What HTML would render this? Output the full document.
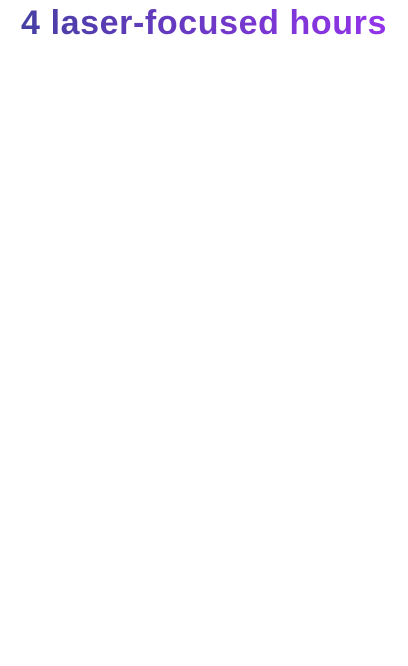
<!DOCTYPE html>
<html><head><style>
html,body{margin:0;padding:0;background:#fff;width:408px;height:666px;overflow:hidden}
h1{margin:0;position:absolute;top:3px;left:0;width:408px;text-align:center;font-family:"Liberation Sans",sans-serif;font-weight:700;font-size:34px;line-height:40px;letter-spacing:0.6px;}
h1 span{background:linear-gradient(90deg,#463fa2,#9333ea);-webkit-background-clip:text;background-clip:text;color:transparent}
</style></head><body>
<h1><span>4 laser-focused hours</span></h1>
</body></html>
